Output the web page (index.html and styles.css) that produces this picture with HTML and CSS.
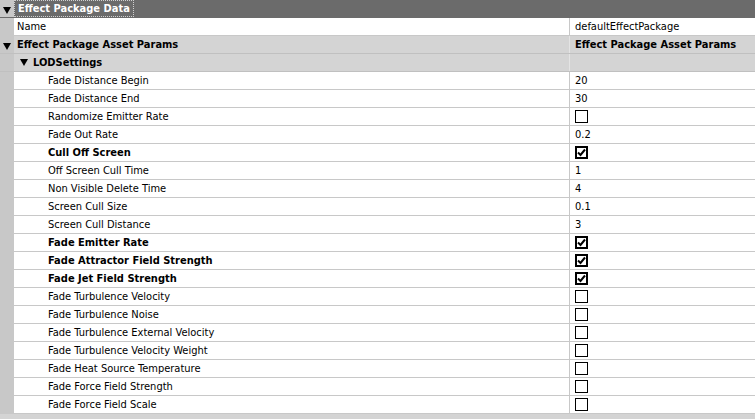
FILE: index.html
```html
<!DOCTYPE html>
<html>
<head>
<meta charset="utf-8">
<link rel="stylesheet" href="styles.css">
<title>Effect Package Data</title>
</head>
<body>
<div class="grid">
  <div class="row head">
    <span class="gut"><span class="tri"></span></span>
    <span class="title"><span class="focus">Effect Package Data</span></span>
  </div>
  <div class="row">
    <span class="gut"></span>
    <span class="name n1">Name</span>
    <span class="val">defaultEffectPackage</span>
  </div>
  <div class="row cat">
    <span class="gut"><span class="tri"></span></span>
    <span class="name n1 b">Effect Package Asset Params</span>
    <span class="val b">Effect Package Asset Params</span>
  </div>
  <div class="row cat">
    <span class="gut"></span>
    <span class="name n2 b"><span class="tri"></span>LODSettings</span>
    <span class="val"></span>
  </div>
  <div class="row"><span class="gut"></span><span class="name n3">Fade Distance Begin</span><span class="val">20</span></div>
  <div class="row"><span class="gut"></span><span class="name n3">Fade Distance End</span><span class="val">30</span></div>
  <div class="row"><span class="gut"></span><span class="name n3">Randomize Emitter Rate</span><span class="val"><span class="box"></span></span></div>
  <div class="row"><span class="gut"></span><span class="name n3">Fade Out Rate</span><span class="val">0.2</span></div>
  <div class="row"><span class="gut"></span><span class="name n3 b">Cull Off Screen</span><span class="val"><span class="box on"><svg width="9" height="9" viewBox="0 0 9 9"><path d="M1 4.5 L3.5 7 L8 1.5" fill="none" stroke="#000" stroke-width="2"/></svg></span></span></div>
  <div class="row"><span class="gut"></span><span class="name n3">Off Screen Cull Time</span><span class="val">1</span></div>
  <div class="row"><span class="gut"></span><span class="name n3">Non Visible Delete Time</span><span class="val">4</span></div>
  <div class="row"><span class="gut"></span><span class="name n3">Screen Cull Size</span><span class="val">0.1</span></div>
  <div class="row"><span class="gut"></span><span class="name n3">Screen Cull Distance</span><span class="val">3</span></div>
  <div class="row"><span class="gut"></span><span class="name n3 b">Fade Emitter Rate</span><span class="val"><span class="box on"><svg width="9" height="9" viewBox="0 0 9 9"><path d="M1 4.5 L3.5 7 L8 1.5" fill="none" stroke="#000" stroke-width="2"/></svg></span></span></div>
  <div class="row"><span class="gut"></span><span class="name n3 b">Fade Attractor Field Strength</span><span class="val"><span class="box on"><svg width="9" height="9" viewBox="0 0 9 9"><path d="M1 4.5 L3.5 7 L8 1.5" fill="none" stroke="#000" stroke-width="2"/></svg></span></span></div>
  <div class="row"><span class="gut"></span><span class="name n3 b">Fade Jet Field Strength</span><span class="val"><span class="box on"><svg width="9" height="9" viewBox="0 0 9 9"><path d="M1 4.5 L3.5 7 L8 1.5" fill="none" stroke="#000" stroke-width="2"/></svg></span></span></div>
  <div class="row"><span class="gut"></span><span class="name n3">Fade Turbulence Velocity</span><span class="val"><span class="box"></span></span></div>
  <div class="row"><span class="gut"></span><span class="name n3">Fade Turbulence Noise</span><span class="val"><span class="box"></span></span></div>
  <div class="row"><span class="gut"></span><span class="name n3">Fade Turbulence External Velocity</span><span class="val"><span class="box"></span></span></div>
  <div class="row"><span class="gut"></span><span class="name n3">Fade Turbulence Velocity Weight</span><span class="val"><span class="box"></span></span></div>
  <div class="row"><span class="gut"></span><span class="name n3">Fade Heat Source Temperature</span><span class="val"><span class="box"></span></span></div>
  <div class="row"><span class="gut"></span><span class="name n3">Fade Force Field Strength</span><span class="val"><span class="box"></span></span></div>
  <div class="row"><span class="gut"></span><span class="name n3">Fade Force Field Scale</span><span class="val"><span class="box"></span></span></div>
</div>
</body>
</html>
```

FILE: styles.css
```css
body {
    margin: 0;
    background-color: #d4d4d4;
    font-family: "DejaVu Sans Condensed", "DejaVu Sans", sans-serif;
    font-size: 11px;
    color: #000;
}
.grid {
    width: 755px;
}
.row {
    display: flex;
    height: 17px;
    line-height: 17px;
    border-bottom: 1px solid #c8c8c8;
    background-color: #fff;
    white-space: nowrap;
}
.gut {
    width: 14px;
    flex: none;
    background-color: #c8c8c8;
    position: relative;
}
.name {
    width: 555px;
    flex: none;
    border-right: 1px solid #c8c8c8;
    overflow: hidden;
}
.val {
    flex: 1;
    padding-left: 5px;
}
.n1 { padding-left: 3px; width: 552px; }
.n2 { padding-left: 6px; width: 549px; }
.n3 { padding-left: 34px; width: 521px; }
.b { font-weight: bold; }

.tri {
    display: inline-block;
    width: 0;
    height: 0;
    border-left: 4px solid transparent;
    border-right: 4px solid transparent;
    border-top: 7px solid #000;
    vertical-align: middle;
    margin-top: -2px;
}
.gut .tri {
    position: absolute;
    left: 3px;
    top: 7px;
    margin: 0;
}
.n2 .tri {
    margin-right: 5px;
}

.head {
    background-color: #6b6b6b;
    border-bottom-color: #6b6b6b;
}
.title {
    flex: 1;
    color: #fff;
    font-weight: bold;
}
.focus {
    display: inline-block;
    height: 15px;
    line-height: 15px;
    padding: 0 3px;
    border: 1px dotted #cfcfcf;
}

.cat {
    background-color: #d4d4d4;
    border-bottom-color: #c0c0c0;
}
.cat .name {
    border-right-color: #e4e4e4;
}

.box {
    display: inline-block;
    box-sizing: border-box;
    width: 13px;
    height: 13px;
    border: 1px solid #000;
    vertical-align: middle;
    margin-top: -2px;
    position: relative;
}
.box.on {
    border-width: 2px;
}
.box svg {
    position: absolute;
    left: 0;
    top: 0;
}
```
